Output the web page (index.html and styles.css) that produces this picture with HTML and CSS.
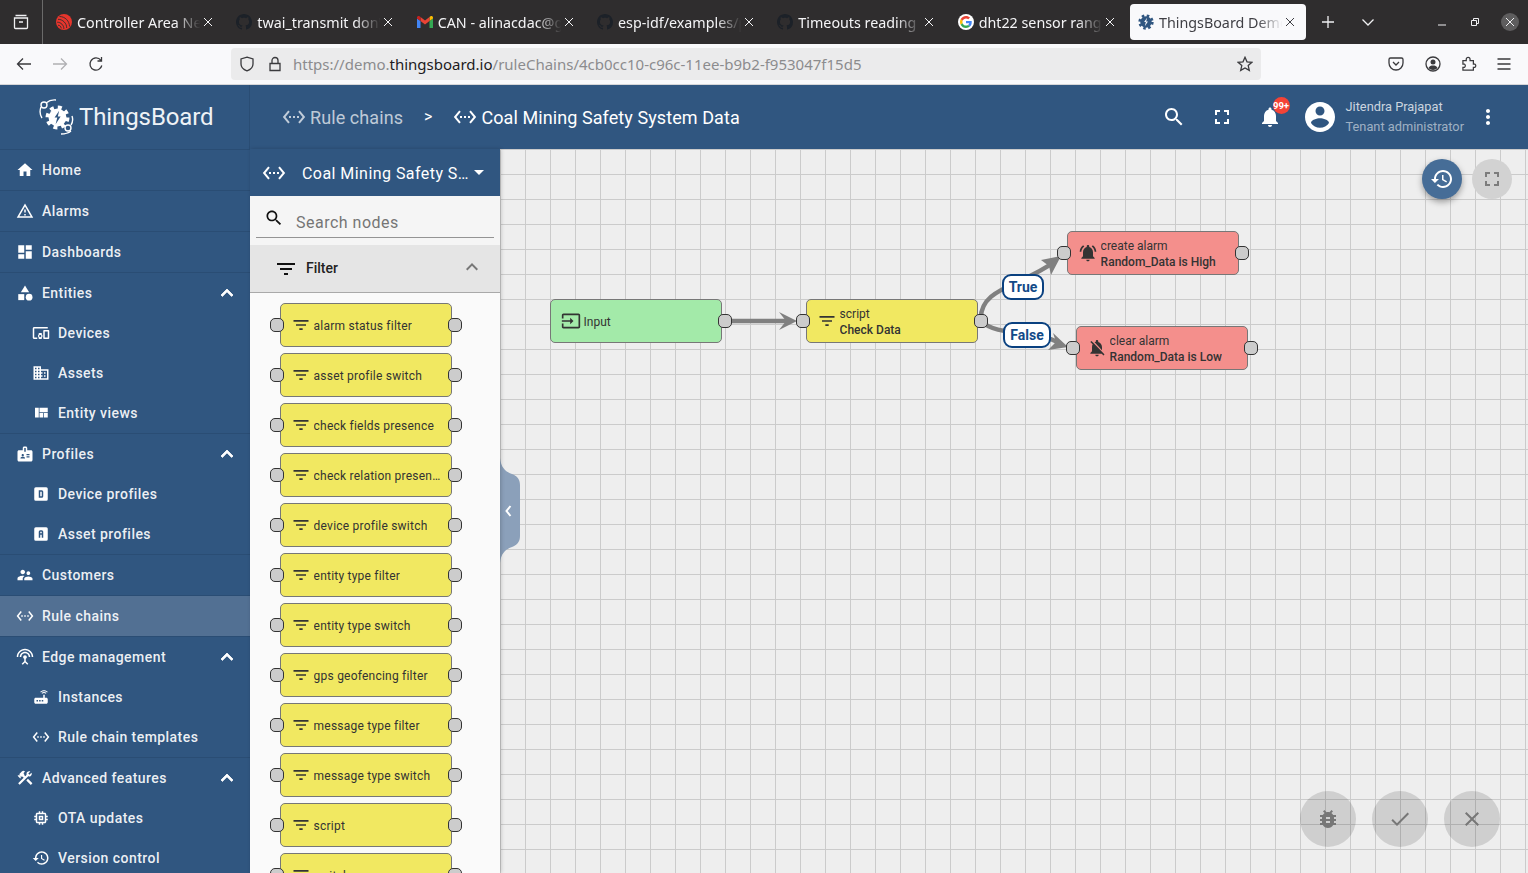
FILE: index.html
```html
<!DOCTYPE html>
<html lang="en">
<head>
<meta charset="utf-8">
<title>ThingsBoard</title>
<link rel="stylesheet" href="styles.css">
</head>
<body>
<svg class="defs" aria-hidden="true">
  <symbol id="i-home" viewBox="0 0 24 24"><path d="M10 20v-6h4v6h5v-8h3L12 3 2 12h3v8z"/></symbol>
  <symbol id="i-warning" viewBox="0 0 24 24"><path d="M1 21h22L12 2 1 21zm3.47-2L12 5.99 19.53 19H4.47zM11 16h2v2h-2zm0-6h2v4h-2z"/></symbol>
  <symbol id="i-dash" viewBox="0 0 24 24"><path d="M3 13h8V3H3v10zm0 8h8v-6H3v6zm10 0h8V11h-8v10zm0-18v6h8V3h-8z"/></symbol>
  <symbol id="i-category" viewBox="0 0 24 24"><path d="M12 2l-5.5 9h11z"/><circle cx="17.5" cy="17.5" r="4.5"/><path d="M3 13.5h8v8H3z"/></symbol>
  <symbol id="i-devices" viewBox="0 0 24 24"><path d="M3 6h18V4H3c-1.1 0-2 .9-2 2v12c0 1.1.9 2 2 2h4v-2H3V6zm10 6H9v1.78c-.61.55-1 1.33-1 2.22s.39 1.67 1 2.22V20h4v-1.78c.61-.55 1-1.34 1-2.22s-.39-1.67-1-2.22V12zm-2 5.5c-.83 0-1.5-.67-1.5-1.5s.67-1.5 1.5-1.5 1.5.67 1.5 1.5-.67 1.5-1.5 1.5zM22 8h-6c-.5 0-1 .5-1 1v10c0 .5.5 1 1 1h6c.5 0 1-.5 1-1V9c0-.5-.5-1-1-1zm-1 10h-4v-8h4v8z"/></symbol>
  <symbol id="i-domain" viewBox="0 0 24 24"><path d="M12 7V3H2v18h20V7H12zM6 19H4v-2h2v2zm0-4H4v-2h2v2zm0-4H4V9h2v2zm0-4H4V5h2v2zm4 12H8v-2h2v2zm0-4H8v-2h2v2zm0-4H8V9h2v2zm0-4H8V5h2v2zm10 12h-8v-2h2v-2h-2v-2h2v-2h-2V9h8v10zm-2-8h-2v2h2v-2zm0 4h-2v2h2v-2z"/></symbol>
  <symbol id="i-quilt" viewBox="0 0 24 24"><path d="M10 18h5v-6h-5v6zm-6 0h5V5H4v13zm12 0h5v-6h-5v6zM10 5v6h11V5H10z"/></symbol>
  <symbol id="i-badge" viewBox="0 0 24 24"><path d="M20 7h-5V4c0-1.1-.9-2-2-2h-2c-1.1 0-2 .9-2 2v3H4c-1.1 0-2 .9-2 2v11c0 1.1.9 2 2 2h16c1.1 0 2-.9 2-2V9c0-1.1-.9-2-2-2zM9 12c.83 0 1.5.67 1.5 1.5S9.83 15 9 15s-1.5-.67-1.5-1.5S8.17 12 9 12zm3 6H6v-.75c0-1 2-1.5 3-1.5s3 .5 3 1.5V18zm1-9h-2V4h2v5zm5 7.5h-4V15h4v1.5zm0-3h-4V12h4v1.5z"/></symbol>
  <symbol id="i-dbox" viewBox="0 0 24 24"><path fill-rule="evenodd" d="M5 3h14a2 2 0 012 2v14a2 2 0 01-2 2H5a2 2 0 01-2-2V5a2 2 0 012-2zm4 4v10h4a2 2 0 002-2V9a2 2 0 00-2-2H9zm2 2h2v6h-2V9z"/></symbol>
  <symbol id="i-abox" viewBox="0 0 24 24"><path fill-rule="evenodd" d="M5 3h14a2 2 0 012 2v14a2 2 0 01-2 2H5a2 2 0 01-2-2V5a2 2 0 012-2zm6 4a2 2 0 00-2 2v8h2v-4h2v4h2V9a2 2 0 00-2-2h-2zm0 2h2v2h-2V9z"/></symbol>
  <symbol id="i-people" viewBox="0 0 24 24"><path d="M16.5 12c1.38 0 2.49-1.12 2.49-2.5S17.88 7 16.5 7C15.12 7 14 8.12 14 9.5s1.12 2.5 2.5 2.5zM9 11c1.66 0 2.99-1.34 2.99-3S10.66 5 9 5C7.34 5 6 6.34 6 8s1.34 3 3 3zm7.5 3c-1.83 0-5.5.92-5.5 2.75V19h11v-2.25c0-1.83-3.67-2.75-5.5-2.75zM9 13c-2.33 0-7 1.17-7 3.5V19h7v-2.25c0-.85.33-2.34 2.37-3.47C10.5 13.1 9.66 13 9 13z"/></symbol>
  <symbol id="i-chain" viewBox="0 0 24 24"><path d="M7.77 6.76L6.23 5.48.82 12l5.41 6.52 1.54-1.28L3.42 12l4.35-5.24zM7 13h2v-2H7v2zm10-2h-2v2h2v-2zm-6 2h2v-2h-2v2zm6.77-7.52l-1.54 1.28L20.58 12l-4.35 5.24 1.54 1.28L23.18 12l-5.41-6.52z"/></symbol>
  <symbol id="i-antenna" viewBox="0 0 24 24"><path d="M12 5c-3.87 0-7 3.13-7 7h2c0-2.76 2.24-5 5-5s5 2.24 5 5h2c0-3.87-3.13-7-7-7zm1 9.29c.88-.39 1.5-1.26 1.5-2.29 0-1.38-1.12-2.5-2.5-2.5S9.5 10.62 9.5 12c0 1.02.62 1.9 1.5 2.29v3.3L7.59 21 9 22.41l3-3 3 3L16.41 21 13 17.59v-3.3zM12 1C5.93 1 1 5.93 1 12h2c0-4.97 4.03-9 9-9s9 4.03 9 9h2c0-6.07-4.93-11-11-11z"/></symbol>
  <symbol id="i-router" viewBox="0 0 24 24"><path d="M20.2 5.9l.8-.8C19.6 3.7 17.8 3 16 3s-3.6.7-5 2.1l.8.8C13 4.8 14.5 4.2 16 4.2s3 .6 4.2 1.7zm-.9.8c-.9-.9-2.1-1.4-3.3-1.4s-2.4.5-3.3 1.4l.8.8c.7-.7 1.6-1 2.5-1 .9 0 1.8.3 2.5 1l.8-.8zM19 13h-2V9h-2v4H5c-1.1 0-2 .9-2 2v4c0 1.1.9 2 2 2h14c1.1 0 2-.9 2-2v-4c0-1.1-.9-2-2-2zM8 18H6v-2h2v2zm3.5 0h-2v-2h2v2zm3.5 0h-2v-2h2v2z"/></symbol>
  <symbol id="i-tools" viewBox="0 0 24 24"><path d="M13.78 15.3l6 6 2.11-2.16-6-6zM17.5 10c1.93 0 3.5-1.57 3.5-3.5 0-.58-.16-1.12-.41-1.6l-2.7 2.7-1.49-1.49 2.7-2.7C18.62 3.16 18.08 3 17.5 3 15.57 3 14 4.57 14 6.5c0 .41.08.8.21 1.16l-1.85 1.85-1.78-1.78.71-.71-1.41-1.41L12 3.49a3 3 0 00-4.24 0L4.22 7.03l1.41 1.41H2.81l-.71.71 3.54 3.54.71-.71V9.15l1.41 1.41.71-.71 1.78 1.78-7.41 7.41 2.12 2.12L16.34 9.79c.36.13.75.21 1.16.21z"/></symbol>
  <symbol id="i-memory" viewBox="0 0 24 24"><path d="M15 9H9v6h6V9zm-2 4h-2v-2h2v2zm8-2V9h-2V7c0-1.1-.9-2-2-2h-2V3h-2v2h-2V3H9v2H7c-1.1 0-2 .9-2 2v2H3v2h2v2H3v2h2v2c0 1.1.9 2 2 2h2v2h2v-2h2v2h2v-2h2c1.1 0 2-.9 2-2v-2h2v-2h-2v-2h2zm-4 6H7V7h10v10z"/></symbol>
  <symbol id="i-history" viewBox="0 0 24 24"><path d="M13 3c-4.97 0-9 4.03-9 9H1l3.89 3.89.07.14L9 12H6c0-3.87 3.13-7 7-7s7 3.13 7 7-3.13 7-7 7c-1.93 0-3.68-.79-4.94-2.06l-1.42 1.42C8.27 19.99 10.51 21 13 21c4.97 0 9-4.03 9-9s-4.03-9-9-9zm-1 5v5l4.28 2.54.72-1.21-3.5-2.08V8H12z"/></symbol>
  <symbol id="i-less" viewBox="0 0 24 24"><path d="M12 8l-6 6 1.41 1.41L12 10.83l4.59 4.58L18 14z"/></symbol>
  <symbol id="i-search" viewBox="0 0 24 24"><path d="M15.5 14h-.79l-.28-.27C15.41 12.59 16 11.11 16 9.5 16 5.91 13.09 3 9.5 3S3 5.91 3 9.5 5.91 16 9.5 16c1.61 0 3.09-.59 4.23-1.57l.27.28v.79l5 4.99L20.49 19l-4.99-5zm-6 0C7.01 14 5 11.99 5 9.5S7.01 5 9.5 5 14 7.01 14 9.5 11.99 14 9.5 14z"/></symbol>
  <symbol id="i-full" viewBox="0 0 24 24"><path d="M7 14H5v5h5v-2H7v-3zm-2-4h2V7h3V5H5v5zm12 7h-3v2h5v-5h-2v3zM14 5v2h3v3h2V5h-5z"/></symbol>
  <symbol id="i-bell" viewBox="0 0 24 24"><path d="M12 22c1.1 0 2-.9 2-2h-4c0 1.1.89 2 2 2zm6-6v-5c0-3.07-1.64-5.64-4.5-6.32V4c0-.83-.67-1.5-1.5-1.5s-1.5.67-1.5 1.5v.68C7.63 5.36 6 7.92 6 11v5l-2 2v1h16v-1l-2-2z"/></symbol>
  <symbol id="i-account" viewBox="0 0 24 24"><path d="M12 2C6.48 2 2 6.48 2 12s4.48 10 10 10 10-4.48 10-10S17.52 2 12 2zm0 3c1.66 0 3 1.34 3 3s-1.34 3-3 3-3-1.34-3-3 1.34-3 3-3zm0 14.2c-2.5 0-4.71-1.28-6-3.22.03-1.99 4-3.08 6-3.08 1.99 0 5.97 1.09 6 3.08-1.29 1.94-3.5 3.22-6 3.22z"/></symbol>
  <symbol id="i-more" viewBox="0 0 24 24"><path d="M12 8c1.1 0 2-.9 2-2s-.9-2-2-2-2 .9-2 2 .9 2 2 2zm0 2c-1.1 0-2 .9-2 2s.9 2 2 2 2-.9 2-2-.9-2-2-2zm0 6c-1.1 0-2 .9-2 2s.9 2 2 2 2-.9 2-2-.9-2-2-2z"/></symbol>
  <symbol id="i-filter" viewBox="0 0 24 24"><path d="M10 18h4v-2h-4v2zM3 6v2h18V6H3zm3 7h12v-2H6v2z"/></symbol>
  <symbol id="i-input" viewBox="0 0 24 24"><path d="M21 3.01H3c-1.1 0-2 .9-2 2V9h2V4.99h18v14.03H3V15H1v4.01c0 1.1.9 1.98 2 1.98h18c1.1 0 2-.88 2-1.98v-14c0-1.11-.9-2-2-2zM11 16l4-4-4-4v3H1v2h10v3z"/></symbol>
  <symbol id="i-bell-active" viewBox="0 0 24 24"><path d="M7.58 4.08L6.15 2.65C3.75 4.48 2.17 7.3 2.03 10.5h2c.15-2.65 1.51-4.97 3.55-6.42zm12.39 6.42h2c-.15-3.2-1.73-6.02-4.12-7.85l-1.42 1.43c2.02 1.45 3.39 3.77 3.54 6.42zM18 11c0-3.07-1.64-5.64-4.5-6.32V4c0-.83-.67-1.5-1.5-1.5s-1.5.67-1.5 1.5v.68C7.63 5.36 6 7.92 6 11v5l-2 2v1h16v-1l-2-2v-5zm-6 11c.14 0 .27-.01.4-.04.65-.14 1.18-.58 1.44-1.18.1-.24.15-.5.15-.78h-4c.01 1.1.9 2 2.01 2z"/></symbol>
  <symbol id="i-bell-off" viewBox="0 0 24 24"><path d="M20 18.69L7.84 6.14 5.27 3.49 4 4.76l2.8 2.8v.01c-.52.99-.8 2.16-.8 3.42v5l-2 2v1h13.73l2 2L21 19.72l-1-1.03zM12 22c1.11 0 2-.89 2-2h-4c0 1.11.89 2 2 2zm6-7.32V11c0-3.08-1.64-5.64-4.5-6.32V4c0-.83-.67-1.5-1.5-1.5s-1.5.67-1.5 1.5v.68c-.15.03-.29.08-.42.12-.1.03-.2.07-.3.11h-.01c-.2.08-.4.17-.59.27-.01 0-.01 0-.02.01L18 14.68z"/></symbol>
  <symbol id="i-bug" viewBox="0 0 24 24"><path d="M20 8h-2.81c-.45-.78-1.07-1.45-1.82-1.96L17 4.41 15.59 3l-2.17 2.17C12.96 5.06 12.49 5 12 5c-.49 0-.96.06-1.41.17L8.41 3 7 4.41l1.62 1.63C7.88 6.55 7.26 7.22 6.81 8H4v2h2.09c-.05.33-.09.66-.09 1v1H4v2h2v1c0 .34.04.67.09 1H4v2h2.81c1.04 1.79 2.97 3 5.19 3s4.15-1.21 5.19-3H20v-2h-2.09c.05-.33.09-.66.09-1v-1h2v-2h-2v-1c0-.34-.04-.67-.09-1H20V8zm-6 8h-4v-2h4v2zm0-4h-4v-2h4v2z"/></symbol>
  <symbol id="i-done" viewBox="0 0 24 24"><path d="M9 16.2L4.8 12l-1.4 1.4L9 19 21 7l-1.4-1.4L9 16.2z"/></symbol>
  <symbol id="i-close" viewBox="0 0 24 24"><path d="M19 6.41L17.59 5 12 10.59 6.41 5 5 6.41 10.59 12 5 17.59 6.41 19 12 13.41 17.59 19 19 17.59 13.41 12z"/></symbol>
  <symbol id="i-github" viewBox="0 0 16 16"><path d="M8 0C3.58 0 0 3.58 0 8c0 3.54 2.29 6.53 5.47 7.59.4.07.55-.17.55-.38 0-.19-.01-.82-.01-1.49-2.01.37-2.53-.49-2.69-.94-.09-.23-.48-.94-.82-1.13-.28-.15-.68-.52-.01-.53.63-.01 1.08.58 1.23.82.72 1.21 1.87.87 2.33.66.07-.52.28-.87.51-1.07-1.78-.2-3.64-.89-3.64-3.95 0-.87.31-1.59.82-2.15-.08-.2-.36-1.02.08-2.12 0 0 .67-.21 2.2.82.64-.18 1.32-.27 2-.27.68 0 1.36.09 2 .27 1.53-1.04 2.2-.82 2.2-.82.44 1.1.16 1.92.08 2.12.51.56.82 1.27.82 2.15 0 3.07-1.87 3.75-3.65 3.95.29.25.54.73.54 1.48 0 1.07-.01 1.93-.01 2.2 0 .21.15.46.55.38A8.013 8.013 0 0016 8c0-4.42-3.58-8-8-8z"/></symbol>
  <symbol id="i-gear" viewBox="0 0 24 24"><circle cx="12" cy="12" r="9.5" fill="none" stroke="currentColor" stroke-width="4" stroke-dasharray="3.73 3.73"/><circle cx="12" cy="12" r="8.6" fill="currentColor"/><path class="gear-mark" d="M13.6 5.5l-4.4 6.6h2.6l-1.6 6.4 4.8-7.4h-2.7z"/></symbol>
</svg>

<div class="tabbar">
  <div class="tabbar-view">
    <svg class="ff-icon light" viewBox="0 0 16 16"><path d="M2.5 1.5h11M1.5 4h13v9.5a1 1 0 01-1 1h-11a1 1 0 01-1-1zM6 8h4"/></svg>
  </div>
  <div class="tabs">
    <div class="tab">
      <svg class="favicon" viewBox="0 0 16 16"><circle cx="8" cy="8" r="8" fill="#e7352c"/><path d="M3.500 2.500c5.500 0 10 4.500 10 10M2 5.300c4.800 0 8.700 3.900 8.700 8.700M1.200 8.200c3.700 0 6.700 3 6.700 6.700M2 11.200c1.800 0 3.200 1.400 3.200 3.200" fill="none" stroke="#2f2d2e" stroke-width=".9"/></svg>
      <span class="tab-title">Controller Area Network</span>
      <svg class="tab-x" viewBox="0 0 10 10"><path d="M1 1l8 8M9 1l-8 8"/></svg>
    </div>
    <div class="tab">
      <svg class="favicon gh"><use href="#i-github"/></svg>
      <span class="tab-title">twai_transmit don't work</span>
      <svg class="tab-x" viewBox="0 0 10 10"><path d="M1 1l8 8M9 1l-8 8"/></svg>
    </div>
    <div class="tab">
      <svg class="favicon" viewBox="0 0 16 12"><path fill="#4285f4" d="M0 12h3.500V5L0 2.400z"/><path fill="#34a853" d="M12.500 12H16V2.400L12.500 5z"/><path fill="#fbbc04" d="M12.500 1v4L16 2.400V1.500C16 .2 14.500-.5 13.500.3z"/><path fill="#ea4335" d="M3.500 5V1L8 4.400 12.500 1v4L8 8.400z"/><path fill="#c5221f" d="M0 1.500v.9L3.500 5V1L2.500.3C1.500-.5 0 .2 0 1.500z"/></svg>
      <span class="tab-title">CAN - alinacdac@gmail.com</span>
      <svg class="tab-x" viewBox="0 0 10 10"><path d="M1 1l8 8M9 1l-8 8"/></svg>
    </div>
    <div class="tab">
      <svg class="favicon gh"><use href="#i-github"/></svg>
      <span class="tab-title">esp-idf/examples/peripherals</span>
      <svg class="tab-x" viewBox="0 0 10 10"><path d="M1 1l8 8M9 1l-8 8"/></svg>
    </div>
    <div class="tab">
      <svg class="favicon gh"><use href="#i-github"/></svg>
      <span class="tab-title">Timeouts reading from DHT</span>
      <svg class="tab-x" viewBox="0 0 10 10"><path d="M1 1l8 8M9 1l-8 8"/></svg>
    </div>
    <div class="tab">
      <svg class="favicon" viewBox="-8 -8 64 64"><circle cx="24" cy="24" r="32" fill="#fff"/><path fill="#EA4335" d="M24 9.500c3.540 0 6.710 1.220 9.210 3.600l6.850-6.850C35.900 2.380 30.470 0 24 0 14.620 0 6.510 5.380 2.560 13.220l7.980 6.190C12.430 13.720 17.740 9.500 24 9.500z"/><path fill="#4285F4" d="M46.980 24.550c0-1.570-.15-3.090-.38-4.550H24v9.020h12.940c-.58 2.960-2.260 5.480-4.780 7.180l7.730 6c4.510-4.180 7.090-10.360 7.090-17.650z"/><path fill="#FBBC05" d="M10.530 28.590c-.48-1.450-.76-2.990-.76-4.590s.27-3.140.76-4.590l-7.980-6.190C.92 16.460 0 20.120 0 24c0 3.880.92 7.540 2.560 10.780l7.970-6.190z"/><path fill="#34A853" d="M24 48c6.480 0 11.930-2.130 15.890-5.810l-7.730-6c-2.150 1.450-4.920 2.300-8.160 2.300-6.260 0-11.570-4.220-13.470-9.910l-7.980 6.190C6.510 42.620 14.620 48 24 48z"/></svg>
      <span class="tab-title">dht22 sensor range and</span>
      <svg class="tab-x" viewBox="0 0 10 10"><path d="M1 1l8 8M9 1l-8 8"/></svg>
    </div>
    <div class="tab active">
      <svg class="favicon gear-fav"><use href="#i-gear"/></svg>
      <span class="tab-title">ThingsBoard Demo</span>
      <svg class="tab-x" viewBox="0 0 10 10"><path d="M1 1l8 8M9 1l-8 8"/></svg>
    </div>
  </div>
  <svg class="ff-icon light newtab" viewBox="0 0 16 16"><path d="M8 2v12M2 8h12"/></svg>
  <svg class="ff-icon light tablist" viewBox="0 0 16 16"><path d="M2.500 5.500L8 11l5.500-5.500"/></svg>
  <div class="win-controls">
    <svg class="win-icon" viewBox="0 0 10 10"><path d="M1 8h8"/></svg>
    <svg class="win-icon" viewBox="0 0 10 10"><path d="M1.500 3.500h5v5h-5zM3.500 3.500v-2h5v5h-2"/></svg>
    <span class="win-close"><svg class="win-icon" viewBox="0 0 10 10"><path d="M1 1l8 8M9 1l-8 8"/></svg></span>
  </div>
</div>

<div class="toolbar">
  <div class="nav-btns">
    <svg class="ff-icon" viewBox="0 0 16 16"><path d="M15 8H1.500M7 2.500L1.500 8 7 13.500"/></svg>
    <svg class="ff-icon faded" viewBox="0 0 16 16"><path d="M1 8h13.500M9 2.500L14.500 8 9 13.500"/></svg>
    <svg class="ff-icon" viewBox="0 0 16 16"><path d="M13.800 9.500A6 6 0 112.900 4.900 6 6 0 0113 4.500M13.500 1v4h-4"/></svg>
  </div>
  <div class="urlbar">
    <svg class="ff-icon" viewBox="0 0 16 16"><path d="M8 1.200l6 1.800v5c0 3.400-2.700 5.700-6 6.800-3.300-1.100-6-3.400-6-6.800V3z"/></svg>
    <svg class="ff-icon lock" viewBox="0 0 16 16"><path d="M3 7.500h10v7H3zM5 7.500V4.500a3 3 0 016 0v3"/></svg>
    <span class="url"><span class="url-dim">https://demo.</span>thingsboard.io<span class="url-dim">/ruleChains/4cb0cc10-c96c-11ee-b9b2-f953047f15d5</span></span>
    <svg class="ff-icon star" viewBox="0 0 16 16"><path d="M8 1.300l2 4.500 4.900.5-3.700 3.300 1.100 4.800L8 12l-4.300 2.400 1.100-4.800L1.100 6.300 6 5.800z"/></svg>
  </div>
  <div class="tool-btns">
    <svg class="ff-icon" viewBox="0 0 16 16"><path d="M2.500 2h11A1.500 1.500 0 0115 3.500V7a7 7 0 01-14 0V3.500A1.500 1.500 0 012.500 2zM5 6l3 3 3-3"/></svg>
    <svg class="ff-icon" viewBox="0 0 16 16"><circle cx="8" cy="8" r="7"/><circle class="solid" cx="8" cy="6" r="2.500"/><path class="solid" d="M3.500 12c1-2 2.500-2.500 4.500-2.500s3.500.5 4.500 2.500c-1 1.300-2.700 2-4.500 2s-3.500-.7-4.500-2z"/></svg>
    <svg class="ff-icon" viewBox="0 0 16 16"><path d="M1.500 5.500h3.500V4a2 2 0 014 0v1.500h3.500V9H14a2 2 0 010 3.500h-1.500v3h-11v-3H3A2 2 0 003 9H1.500z" transform="translate(.5 -.5) scale(.95)"/></svg>
    <svg class="ff-icon" viewBox="0 0 16 16"><path d="M1.500 3h13M1.500 8h13M1.500 13h13"/></svg>
  </div>
</div>

<div class="app">
  <aside class="sidebar">
    <div class="logo">
      <svg class="logo-mark" viewBox="0 0 38 38">
        <use href="#i-gear" x="7" y="7" width="25" height="25"/>
        <path class="logo-line" d="M3 9C1.500 13 2 17 4 20M8 5c3-2.500 6-3.500 10-3M33 33c-3 2.500-6 3-10 3M33 27c2-3 2-6 1-9"/>
        <circle class="logo-line" cx="6" cy="7" r="3"/>
        <circle class="logo-line" cx="30" cy="30" r="3"/>
      </svg>
      <span class="logo-text">ThingsBoard</span>
    </div>
    <nav class="menu">
      <div class="menu-group"><a class="menu-item"><svg><use href="#i-home"/></svg>Home</a></div>
      <div class="menu-group"><a class="menu-item"><svg><use href="#i-warning"/></svg>Alarms</a></div>
      <div class="menu-group"><a class="menu-item"><svg><use href="#i-dash"/></svg>Dashboards</a></div>
      <div class="menu-group">
        <a class="menu-item"><svg><use href="#i-category"/></svg>Entities<svg class="chev"><use href="#i-less"/></svg></a>
        <a class="menu-item sub"><svg><use href="#i-devices"/></svg>Devices</a>
        <a class="menu-item sub"><svg><use href="#i-domain"/></svg>Assets</a>
        <a class="menu-item sub"><svg><use href="#i-quilt"/></svg>Entity views</a>
      </div>
      <div class="menu-group">
        <a class="menu-item"><svg><use href="#i-badge"/></svg>Profiles<svg class="chev"><use href="#i-less"/></svg></a>
        <a class="menu-item sub"><svg><use href="#i-dbox"/></svg>Device profiles</a>
        <a class="menu-item sub"><svg><use href="#i-abox"/></svg>Asset profiles</a>
      </div>
      <div class="menu-group"><a class="menu-item"><svg><use href="#i-people"/></svg>Customers</a></div>
      <div class="menu-group"><a class="menu-item current"><svg><use href="#i-chain"/></svg>Rule chains</a></div>
      <div class="menu-group">
        <a class="menu-item"><svg><use href="#i-antenna"/></svg>Edge management<svg class="chev"><use href="#i-less"/></svg></a>
        <a class="menu-item sub"><svg><use href="#i-router"/></svg>Instances</a>
        <a class="menu-item sub"><svg><use href="#i-chain"/></svg>Rule chain templates</a>
      </div>
      <div class="menu-group">
        <a class="menu-item"><svg><use href="#i-tools"/></svg>Advanced features<svg class="chev"><use href="#i-less"/></svg></a>
        <a class="menu-item sub"><svg><use href="#i-memory"/></svg>OTA updates</a>
        <a class="menu-item sub"><svg><use href="#i-history"/></svg>Version control</a>
      </div>
    </nav>
  </aside>

  <main class="main">
    <header class="topbar">
      <div class="crumbs">
        <svg class="crumb-icon dim"><use href="#i-chain"/></svg>
        <span class="crumb dim">Rule chains</span>
        <span class="crumb-sep">&gt;</span>
        <svg class="crumb-icon"><use href="#i-chain"/></svg>
        <span class="crumb">Coal Mining Safety System Data</span>
      </div>
      <div class="top-actions">
        <svg class="top-icon"><use href="#i-search"/></svg>
        <svg class="top-icon"><use href="#i-full"/></svg>
        <span class="bell"><svg class="top-icon"><use href="#i-bell"/></svg><span class="badge">99+</span></span>
        <svg class="avatar"><use href="#i-account"/></svg>
        <div class="user">
          <span class="user-name">Jitendra Prajapat</span>
          <span class="user-role">Tenant administrator</span>
        </div>
        <svg class="top-icon more"><use href="#i-more"/></svg>
      </div>
    </header>

    <div class="work">
      <section class="palette">
        <div class="chain-select">
          <svg class="crumb-icon"><use href="#i-chain"/></svg>
          <span class="chain-name">Coal Mining Safety System Data</span>
          <span class="caret"></span>
        </div>
        <div class="search">
          <div class="search-box">
            <svg class="search-icon"><use href="#i-search"/></svg>
            <span>Search nodes</span>
          </div>
        </div>
        <div class="group-head">
          <svg class="group-icon"><use href="#i-filter"/></svg>
          <span class="group-title">Filter</span>
          <svg class="group-chev"><use href="#i-less"/></svg>
        </div>
        <div class="node-list">
          <div class="node filter"><i class="port in"></i><svg class="node-icon"><use href="#i-filter"/></svg><span class="node-label">alarm status filter</span><i class="port out"></i></div>
          <div class="node filter"><i class="port in"></i><svg class="node-icon"><use href="#i-filter"/></svg><span class="node-label">asset profile switch</span><i class="port out"></i></div>
          <div class="node filter"><i class="port in"></i><svg class="node-icon"><use href="#i-filter"/></svg><span class="node-label">check fields presence</span><i class="port out"></i></div>
          <div class="node filter"><i class="port in"></i><svg class="node-icon"><use href="#i-filter"/></svg><span class="node-label">check relation presence</span><i class="port out"></i></div>
          <div class="node filter"><i class="port in"></i><svg class="node-icon"><use href="#i-filter"/></svg><span class="node-label">device profile switch</span><i class="port out"></i></div>
          <div class="node filter"><i class="port in"></i><svg class="node-icon"><use href="#i-filter"/></svg><span class="node-label">entity type filter</span><i class="port out"></i></div>
          <div class="node filter"><i class="port in"></i><svg class="node-icon"><use href="#i-filter"/></svg><span class="node-label">entity type switch</span><i class="port out"></i></div>
          <div class="node filter"><i class="port in"></i><svg class="node-icon"><use href="#i-filter"/></svg><span class="node-label">gps geofencing filter</span><i class="port out"></i></div>
          <div class="node filter"><i class="port in"></i><svg class="node-icon"><use href="#i-filter"/></svg><span class="node-label">message type filter</span><i class="port out"></i></div>
          <div class="node filter"><i class="port in"></i><svg class="node-icon"><use href="#i-filter"/></svg><span class="node-label">message type switch</span><i class="port out"></i></div>
          <div class="node filter"><i class="port in"></i><svg class="node-icon"><use href="#i-filter"/></svg><span class="node-label">script</span><i class="port out"></i></div>
          <div class="node filter"><i class="port in"></i><svg class="node-icon"><use href="#i-filter"/></svg><span class="node-label">switch</span><i class="port out"></i></div>
        </div>
      </section>

      <section class="canvas">
        <svg class="edges" viewBox="500 149 1028 724">
          <path d="M725 321H790"/>
          <path d="M981 321C978 288 1022 286 1054 262"/>
          <path d="M981 321C998 338 1038 328 1060 344"/>
          <path class="head" d="M797 321L779 312L786 321L779 330z"/>
          <path class="head" d="M1061 256L1041 260L1049 266L1051 275z"/>
          <path class="head" d="M1068 347L1053 333L1056 342L1048 350z"/>
        </svg>

        <div class="node input at-input"><svg class="node-icon"><use href="#i-input"/></svg><span class="node-label">Input</span><i class="port out"></i></div>
        <div class="node filter at-script"><i class="port in"></i><svg class="node-icon"><use href="#i-filter"/></svg><span class="node-label"><span>script</span><b>Check Data</b></span><i class="port out"></i></div>
        <div class="node alarm at-create"><i class="port in"></i><svg class="node-icon"><use href="#i-bell-active"/></svg><span class="node-label"><span>create alarm</span><b>Random_Data is High</b></span><i class="port out"></i></div>
        <div class="node alarm at-clear"><i class="port in"></i><svg class="node-icon"><use href="#i-bell-off"/></svg><span class="node-label"><span>clear alarm</span><b>Random_Data is Low</b></span><i class="port out"></i></div>

        <span class="edge-label at-true">True</span>
        <span class="edge-label at-false">False</span>

        <svg class="panel-toggle" viewBox="0 0 20 106"><path d="M0 0C1 10 6 14 12 16C17 18 20 21 20 27V78C20 84 17 87 12 89C6 91 1 95 0 105z"/><path class="toggle-chev" d="M10.500 48l-4 5 4 5"/></svg>

        <div class="view-btns">
          <span class="round primary"><svg><use href="#i-history"/></svg></span>
          <span class="round muted"><svg><use href="#i-full"/></svg></span>
        </div>
        <div class="fabs">
          <span class="fab"><svg><use href="#i-bug"/></svg></span>
          <span class="fab"><svg><use href="#i-done"/></svg></span>
          <span class="fab"><svg><use href="#i-close"/></svg></span>
        </div>
      </section>
    </div>
  </main>
</div>
</body>
</html>
```
FILE: styles.css
```css
* { box-sizing: border-box; }

html, body { height: 100%; }

body {
  margin: 0;
  display: flex;
  flex-direction: column;
  overflow: hidden;
  font-family: Roboto, "Liberation Sans", sans-serif;
  background: #eee;
}

.defs { display: none; }

/* ---------- browser chrome ---------- */
.tabbar {
  height: 44px;
  flex: none;
  display: flex;
  align-items: center;
  background: #2f2d2e;
  font-family: "Noto Sans", sans-serif;
}

.tabbar-view {
  width: 43px;
  height: 44px;
  flex: none;
  display: flex;
  align-items: center;
  justify-content: center;
  border-right: 1px solid #6b6a6a;
}

.ff-icon {
  width: 16px;
  height: 16px;
  flex: none;
  fill: none;
  stroke: #3a3a3d;
  stroke-width: 1.3;
}

.ff-icon.light { stroke: #f0f0f2; }
.ff-icon.faded { stroke: #b0b0b3; }
.ff-icon .solid { fill: #3a3a3d; stroke: none; }

.tabs {
  display: flex;
  gap: 4.33px;
  margin-left: 5px;
}

.tab {
  width: 176px;
  height: 36px;
  flex: none;
  display: flex;
  align-items: center;
  padding: 0 11px 0 8px;
  border-radius: 4px;
  color: #f4f4f6;
}

.tab.active {
  background: #f9f9fb;
  color: #3f3f44;
}

.favicon {
  width: 16px;
  height: 16px;
  flex: none;
  margin-right: 5px;
}

.favicon.gh { fill: #1c2128; }

.gear-fav {
  color: #305680;
  --gear-mark: #f9f9fb;
}

.gear-mark { fill: var(--gear-mark, #305680); }

.tab-title {
  flex: 1;
  min-width: 0;
  font-size: 14.3px;
  white-space: nowrap;
  overflow: hidden;
  -webkit-mask-image: linear-gradient(to right, #000 78%, transparent 98%);
  mask-image: linear-gradient(to right, #000 78%, transparent 98%);
}

.tab-x {
  width: 10px;
  height: 10px;
  flex: none;
  fill: none;
  stroke: currentColor;
  stroke-width: 1;
}

.newtab { margin-left: 14px; }
.tablist { margin-left: 24px; }

.win-controls {
  margin-left: auto;
  display: flex;
  align-items: center;
  gap: 23px;
  padding-right: 9px;
}

.win-icon {
  width: 10px;
  height: 10px;
  fill: none;
  stroke: #f0f0f2;
  stroke-width: 1;
}

.win-close {
  width: 18px;
  height: 18px;
  margin-left: -2px;
  display: flex;
  align-items: center;
  justify-content: center;
  border-radius: 50%;
  background: #5e5d5e;
}

.toolbar {
  height: 41px;
  flex: none;
  display: flex;
  align-items: center;
  background: #f9f9fb;
  border-bottom: 1px solid #d6d6d8;
  font-family: "Noto Sans", sans-serif;
}

.nav-btns {
  width: 231px;
  flex: none;
  display: flex;
  gap: 20px;
  padding-left: 16px;
}

.urlbar {
  width: 1030px;
  height: 32px;
  flex: none;
  display: flex;
  align-items: center;
  padding: 0 8px;
  border-radius: 4px;
  background: #ebebec;
}

.lock { margin-left: 12px; }

.url {
  margin-left: 10px;
  font-size: 15px;
  color: #1d1b22;
  white-space: nowrap;
}

.url-dim { color: #8c8c8e; }

.star { margin-left: auto; }

.tool-btns {
  display: flex;
  gap: 20px;
  padding-left: 127px;
}

.tool-btns .ff-icon:nth-child(2) { margin-left: 1px; }
.tool-btns .ff-icon:nth-child(4) { margin-left: -1px; }

/* ---------- app shell ---------- */
.app {
  flex: 1;
  min-height: 0;
  display: flex;
}

.sidebar {
  width: 250px;
  flex: none;
  overflow: hidden;
  background: #305680;
  color: #fff;
}

.logo {
  height: 65px;
  display: flex;
  align-items: center;
  padding-left: 38px;
  border-bottom: 1px solid #2a4d74;
  border-right: 1px solid #2a4d74;
}

.logo-mark {
  width: 38px;
  height: 38px;
  flex: none;
  color: #fff;
  --gear-mark: #305680;
}

.logo-line {
  fill: none;
  stroke: #fff;
  stroke-width: 1.4;
}

.logo-text {
  margin-left: 3px;
  font-size: 24px;
  letter-spacing: -.1px;
  color: #eef2f6;
}

.menu-group { border-bottom: 1px solid #2a4d74; }

.menu-item {
  height: 40px;
  display: flex;
  align-items: center;
  padding: 0 11px 0 16px;
  font-size: 14px;
  font-weight: 500;
  letter-spacing: .45px;
  color: rgba(255, 255, 255, .92);
}

.menu-item svg {
  width: 18px;
  height: 18px;
  flex: none;
  margin-right: 8px;
  fill: #fff;
}

.menu-item.sub { padding-left: 32px; }

.menu-item.current { background: #527093; }

.menu-item .chev {
  width: 24px;
  height: 24px;
  margin: 0 0 0 auto;
  stroke: #fff;
  stroke-width: .8;
}

.main {
  flex: 1;
  min-width: 0;
  display: flex;
  flex-direction: column;
}

.topbar {
  height: 64px;
  flex: none;
  display: flex;
  align-items: center;
  justify-content: space-between;
  padding: 0 28px 0 32px;
  background: #305680;
  color: #fff;
}

.crumbs {
  display: flex;
  align-items: center;
  font-size: 18px;
  letter-spacing: .08px;
}

.crumb-icon {
  width: 24px;
  height: 24px;
  flex: none;
  fill: #fff;
}

.crumb-icon.dim { fill: rgba(255, 255, 255, .7); }

.crumb { margin-left: 4px; }
.crumb.dim { color: rgba(255, 255, 255, .7); }

.crumb-sep {
  margin: -2px 21px 0 21px;
  font-size: 16px;
}

.top-actions {
  display: flex;
  align-items: center;
}

.top-icon {
  width: 24px;
  height: 24px;
  flex: none;
  fill: #fff;
  display: block;
}

.top-actions > .top-icon:nth-child(2) { margin-left: 24px; }

.bell {
  position: relative;
  margin-left: 24px;
}

.badge {
  position: absolute;
  top: -8px;
  right: -8px;
  width: 17px;
  height: 17px;
  display: flex;
  align-items: center;
  justify-content: center;
  border-radius: 50%;
  background: #f44336;
  font-size: 9.5px;
  font-weight: 700;
  color: #fff;
}

.avatar {
  width: 36px;
  height: 36px;
  flex: none;
  margin-left: 20px;
  fill: #fff;
}

.user {
  display: flex;
  flex-direction: column;
  gap: 6px;
  margin-left: 8px;
  font-size: 12.8px;
  line-height: 14px;
}

.user-name { color: rgba(255, 255, 255, .76); }
.user-role { color: rgba(255, 255, 255, .55); }

.more { margin-left: 12px; }

.work {
  flex: 1;
  min-height: 0;
  display: flex;
}

/* ---------- node palette ---------- */
.palette {
  width: 250px;
  flex: none;
  overflow: hidden;
  background: #fafafa;
  box-shadow: 1px 0 4px rgba(0, 0, 0, .2);
  z-index: 1;
}

.chain-select {
  height: 47px;
  display: flex;
  align-items: center;
  padding: 0 16px 0 12px;
  background: #305680;
  color: #fff;
  font-size: 16px;
  letter-spacing: .45px;
}

.chain-name {
  flex: 1;
  min-width: 0;
  margin: 2px 0 0 16px;
  overflow: hidden;
  white-space: nowrap;
  text-overflow: ellipsis;
}

.caret {
  width: 0;
  height: 0;
  margin-left: 5px;
  border-left: 5px solid transparent;
  border-right: 5px solid transparent;
  border-top: 5px solid #fff;
}

.search {
  height: 49px;
  padding: 0 6px 7px;
  background: #f5f5f5;
}

.search-box {
  height: 42px;
  display: flex;
  align-items: center;
  padding: 8px 0 0 8px;
  border-bottom: 1px solid #949494;
  font-size: 16px;
  letter-spacing: .5px;
  color: #757575;
}

.search-box span { margin-top: 4px; }

.search-icon {
  width: 20px;
  height: 20px;
  flex: none;
  margin: -6px 12px 0 0;
  fill: #111;
}

.group-head {
  height: 48px;
  display: flex;
  align-items: center;
  padding: 0 16px 2px 24px;
  background: #e5e5e5;
  border-bottom: 1px solid #a9a9a9;
}

.group-icon {
  width: 24px;
  height: 24px;
  flex: none;
  margin-top: 2px;
  fill: #111;
}

.group-title {
  margin-left: 8px;
  font-size: 14px;
  font-weight: 500;
  color: #222;
}

.group-chev {
  width: 24px;
  height: 24px;
  margin: -2px 0 0 auto;
  fill: #777;
}

.node-list {
  display: flex;
  flex-direction: column;
  gap: 6px;
  padding: 10px 0 0 30px;
}

/* ---------- rule nodes ---------- */
.node {
  position: relative;
  width: 172px;
  height: 44px;
  flex: none;
  display: flex;
  align-items: center;
  padding: 0 10px;
  border: 1px solid #777;
  border-radius: 5px;
  font-size: 12px;
  line-height: 16px;
  letter-spacing: .22px;
  color: #333;
}

.node.filter { background: #f1e861; }
.node.input { background: #a3eaa9; }
.node.alarm { background: #f48f8c; }

.canvas > .node { letter-spacing: 0; }

.node-icon {
  width: 20px;
  height: 20px;
  flex: none;
  margin-right: 3px;
  fill: #333;
}

.node-label {
  min-width: 0;
  margin-top: 2px;
  margin-left: -.4px;
  display: block;
  overflow: hidden;
  white-space: nowrap;
  text-overflow: ellipsis;
}

.node-label span,
.node-label b {
  display: block;
  font-weight: 400;
}

.node-label b { font-weight: 500; }

.port {
  position: absolute;
  top: 14px;
  width: 14px;
  height: 14px;
  border: 1px solid #333;
  border-radius: 5px;
  background: #ccc;
}

.port.in { left: -11px; }
.port.out { right: -11px; }

/* ---------- canvas ---------- */
.canvas {
  position: relative;
  flex: 1;
  min-width: 0;
  overflow: hidden;
  background-color: #eee;
  background-image:
    linear-gradient(to right, #cbcbcb 1px, transparent 1px),
    linear-gradient(to bottom, #cbcbcb 1px, transparent 1px);
  background-size: 25px 25px;
}

.edges {
  position: absolute;
  left: 0;
  top: 0;
  width: 1028px;
  height: 724px;
  fill: none;
  stroke: #808080;
  stroke-width: 4.5;
}

.edges .head {
  fill: #808080;
  stroke: none;
}

.canvas > .node { position: absolute; }

.at-input { left: 50px; top: 150px; }
.at-script { left: 306px; top: 150px; }
.at-create { left: 567px; top: 82px; }
.at-clear { left: 576px; top: 177px; }

.edge-label {
  position: absolute;
  height: 26px;
  display: flex;
  align-items: center;
  justify-content: center;
  border: 2px solid #0a4180;
  border-radius: 9px;
  background: #fff;
  font-size: 14px;
  font-weight: 700;
  color: #124a88;
}

.at-true { left: 502px; top: 125px; width: 42px; }
.at-false { left: 503px; top: 173px; width: 48px; }

.panel-toggle {
  position: absolute;
  left: 0;
  top: 309px;
  width: 20px;
  height: 106px;
  fill: #8ba0ba;
}

.panel-toggle .toggle-chev {
  fill: none;
  stroke: #fff;
  stroke-width: 2;
}

.view-btns {
  position: absolute;
  top: 10px;
  right: 16px;
  display: flex;
  gap: 10px;
}

.round {
  width: 40px;
  height: 40px;
  display: flex;
  align-items: center;
  justify-content: center;
  border-radius: 50%;
}

.round svg {
  width: 24px;
  height: 24px;
}

.round.primary {
  background: #466d97;
  box-shadow: 0 3px 6px rgba(0, 0, 0, .35);
  fill: #fff;
}

.round.muted {
  background: #d2d2d2;
  fill: #7c7c7c;
}

.fabs {
  position: absolute;
  right: 28px;
  bottom: 26px;
  display: flex;
  gap: 16px;
}

.fab {
  width: 56px;
  height: 56px;
  display: flex;
  align-items: center;
  justify-content: center;
  border-radius: 50%;
  background: rgba(0, 0, 0, .13);
  fill: #777;
}

.fab svg {
  width: 24px;
  height: 24px;
}
```
